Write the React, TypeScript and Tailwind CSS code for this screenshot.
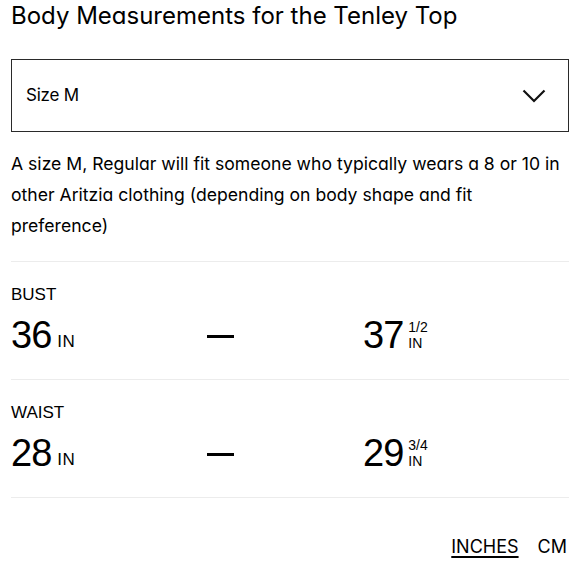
import React from "react";

const rows = [
  { label: "BUST", from: "36", to: "37", frac: "1/2" },
  { label: "WAIST", from: "28", to: "29", frac: "3/4" },
];

export default function App() {
  return (
    <div className="w-[580px] h-[580px] bg-white text-black px-[11px] pt-[1px] font-['Inter',sans-serif] [font-feature-settings:'cv11']">
      <h1 className="text-[24px] leading-[30px]">Body Measurements for the Tenley Top</h1>

      {/* size select */}
      <div className="mt-[28px] h-[73px] border border-[#2a2a2a] flex items-center justify-between pl-[14px] pr-[22px]">
        <span className="text-[17px] tracking-[-0.2px]">Size M</span>
        <svg width="24" height="14" viewBox="0 0 24 14" fill="none" stroke="#111" strokeWidth="2.2">
          <path d="M1.5 1.5l10.5 10.5L22.5 1.5" />
        </svg>
      </div>

      <p className="mt-[16px] text-[17.6px] leading-[31px]">
        A size M, Regular will fit someone who typically wears a 8 or 10 in other Aritzia clothing (depending on body shape and fit preference)
      </p>

      <div className="mt-[20px] border-t border-[#ececec]">
        {rows.map((r) => (
          <div key={r.label} className="border-b border-[#ececec] pt-[23px] pb-[24px]">
            <div className="text-[17px] leading-[20px] font-['Liberation_Sans',sans-serif]">{r.label}</div>
            <div className="mt-[6px] grid grid-cols-[196px_156px_1fr] items-end font-['Liberation_Sans',sans-serif] h-[44px]">
              <div className="flex items-end">
                <span className="text-[38px] leading-[40px] tracking-[-1px]">{r.from}</span>
                <span className="ml-[6px] mb-[5px] text-[17px] leading-[17px] tracking-[0.5px]">IN</span>
              </div>
              <div className="flex items-center h-[44px]">
                <div className="w-[27px] h-[3px] bg-black mt-[6px]" />
              </div>
              <div className="flex items-end">
                <span className="text-[38px] leading-[40px] tracking-[-1px]">{r.to}</span>
                <span className="ml-[5px] mb-[4px] flex flex-col items-start">
                  <span className="text-[14px] leading-[16px]">{r.frac}</span>
                  <span className="text-[14px] leading-[16px]">IN</span>
                </span>
              </div>
            </div>
          </div>
        ))}
      </div>

      <div className="mt-[38px] flex justify-end gap-[19px] pr-[2px] text-[18px] leading-[22px]">
        <span className="underline underline-offset-[3px] decoration-[2px]">INCHES</span>
        <span>CM</span>
      </div>
    </div>
  );
}
